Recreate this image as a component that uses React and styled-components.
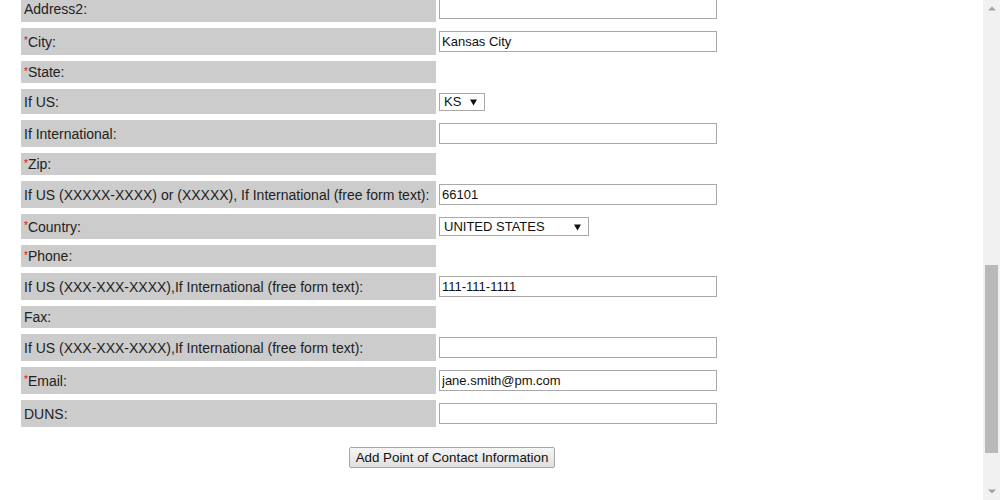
import React from "react";
import styled, { createGlobalStyle } from "styled-components";

const Global = createGlobalStyle`
  html, body { margin: 0; padding: 0; background: #fff; overflow: hidden; }
  body { font-family: "Liberation Sans", Arial, sans-serif; }
`;

const Page = styled.div`
  display: flex;
  width: 1000px;
  height: 500px;
  overflow: hidden;
`;

const Content = styled.div`
  flex: 1;
  padding-left: 21px;
  overflow: hidden;
`;

const Form = styled.div`
  display: flex;
  flex-direction: column;
  gap: 6px;
  margin-top: -5px;
`;

const Row = styled.div`
  display: grid;
  grid-template-columns: 415px 1fr;
  column-gap: 3px;
  height: ${(p) => p.$h}px;
`;

const Label = styled.div`
  display: flex;
  align-items: center;
  background: #cccccc;
  padding-left: 3px;
  font-size: 14px;
  color: #222;
  white-space: nowrap;
`;

const Req = styled.span`
  color: #e0101a;
  font-size: 10px;
  position: relative;
  top: -1px;
`;

const Field = styled.div`
  display: flex;
  align-items: center;
`;

const TextInput = styled.input`
  box-sizing: border-box;
  width: 278px;
  height: 21px;
  border: 1px solid #a9a9a9;
  padding: 1px 2px;
  margin: 0;
  font-family: "Liberation Sans", Arial, sans-serif;
  font-size: 13px;
  color: #111;
  background: #fff;
  outline: none;
`;

const SelectWrap = styled.div`
  position: relative;
  display: inline-flex;
`;

const Select = styled.select`
  appearance: none;
  -webkit-appearance: none;
  box-sizing: border-box;
  width: ${(p) => p.$w}px;
  height: ${(p) => p.$hh}px;
  border: 1px solid #a9a9a9;
  border-radius: 0;
  background: #fff;
  margin: 0;
  padding: 0 0 0 4px;
  font-family: "Liberation Sans", Arial, sans-serif;
  font-size: 13px;
  color: #111;
  outline: none;
`;

const Arrow = styled.svg`
  position: absolute;
  right: 8px;
  top: 50%;
  margin-top: -3px;
  pointer-events: none;
`;

const ButtonRow = styled.div`
  width: 862px;
  display: flex;
  justify-content: center;
  margin-top: 20px;
`;

const Button = styled.button`
  height: 21px;
  padding: 0 6px;
  border: 1px solid #a6a6a6;
  border-radius: 2px;
  background: linear-gradient(#f6f6f6, #dedede);
  font-family: "Liberation Sans", Arial, sans-serif;
  font-size: 13.33px;
  color: #111;
`;

const Scrollbar = styled.div`
  width: 17px;
  flex: none;
  background: #f1f1f1;
  display: flex;
  flex-direction: column;
  align-items: center;
`;

const ScrollBtn = styled.div`
  height: 17px;
  width: 17px;
  display: flex;
  align-items: center;
  justify-content: center;
`;

const Track = styled.div`
  flex: 1;
  width: 17px;
  display: flex;
  flex-direction: column;
  align-items: center;
`;

const Thumb = styled.div`
  width: 13px;
  background: #b9b9b9;
`;

const Caret = () => (
  <Arrow width="7" height="7" viewBox="0 0 7 7">
    <path d="M0 0.5 H7 L3.5 6.5 Z" fill="#111" />
  </Arrow>
);

function Text({ value }) {
  return (
    <Field>
      <TextInput defaultValue={value} />
    </Field>
  );
}

function Dropdown({ value, w, h }) {
  return (
    <Field>
      <SelectWrap>
        <Select $w={w} $hh={h} defaultValue={value}>
          <option>{value}</option>
        </Select>
        <Caret />
      </SelectWrap>
    </Field>
  );
}

const rows = [
  { label: "Address2:", h: 27, input: <Text value="" /> },
  { label: "City:", req: true, h: 27, input: <Text value="Kansas City" /> },
  { label: "State:", req: true, h: 22 },
  { label: "If US:", h: 25, input: <Dropdown value="KS" w={46} h={18} /> },
  { label: "If International:", h: 27, input: <Text value="" /> },
  { label: "Zip:", req: true, h: 22 },
  {
    label: "If US (XXXXX-XXXX) or (XXXXX), If International (free form text):",
    h: 27,
    input: <Text value="66101" />,
  },
  { label: "Country:", req: true, h: 25, input: <Dropdown value="UNITED STATES" w={150} h={19} /> },
  { label: "Phone:", req: true, h: 22 },
  {
    label: "If US (XXX-XXX-XXXX),If International (free form text):",
    h: 27,
    input: <Text value="111-111-1111" />,
  },
  { label: "Fax:", h: 22 },
  {
    label: "If US (XXX-XXX-XXXX),If International (free form text):",
    h: 27,
    input: <Text value="" />,
  },
  { label: "Email:", req: true, h: 27, input: <Text value="jane.smith@pm.com" /> },
  { label: "DUNS:", h: 27, input: <Text value="" /> },
];

export default function App() {
  return (
    <>
      <Global />
      <Page>
        <Content>
          <Form>
            {rows.map((r, i) => (
              <Row key={i} $h={r.h}>
                <Label>
                  {r.req && <Req>*</Req>}
                  {r.label}
                </Label>
                {r.input || <div />}
              </Row>
            ))}
          </Form>
          <ButtonRow>
            <Button type="button">Add Point of Contact Information</Button>
          </ButtonRow>
        </Content>
        <Scrollbar>
          <ScrollBtn>
            <svg width="8" height="5" viewBox="0 0 8 5">
              <path d="M0 4.5 L4 0.5 L8 4.5 Z" fill="#a3a3a3" />
            </svg>
          </ScrollBtn>
          <Track>
            <Thumb style={{ marginTop: 248, height: 188 }} />
          </Track>
          <ScrollBtn>
            <svg width="8" height="5" viewBox="0 0 8 5">
              <path d="M0 0.5 L8 0.5 L4 4.5 Z" fill="#a3a3a3" />
            </svg>
          </ScrollBtn>
        </Scrollbar>
      </Page>
    </>
  );
}
